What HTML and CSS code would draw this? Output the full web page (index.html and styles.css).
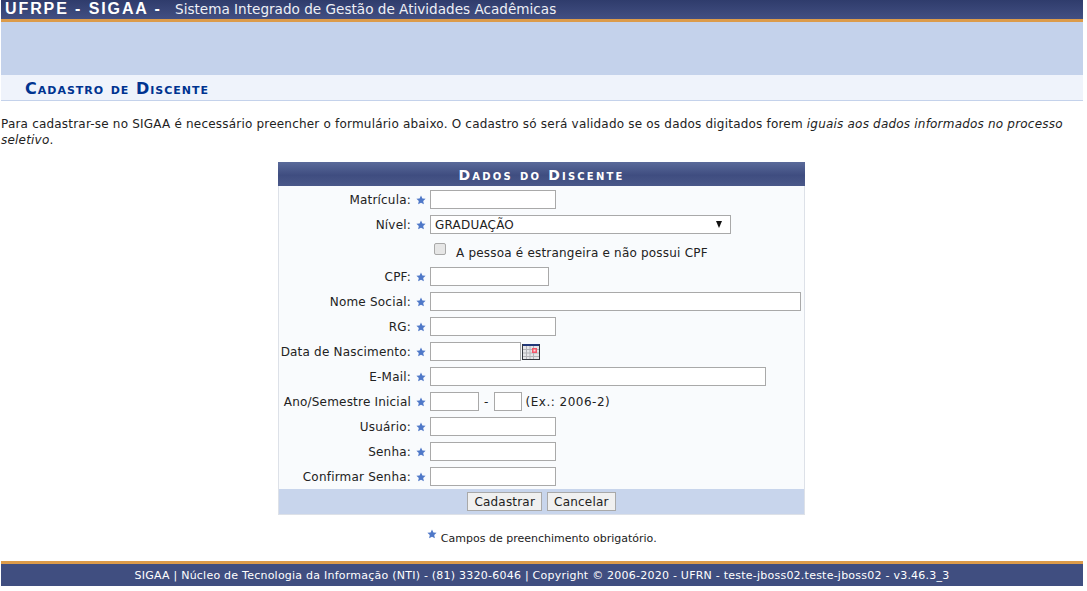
FILE: index.html
```html
<!DOCTYPE html>
<html lang="pt-BR">
<head>
    <meta charset="UTF-8">
    <title>SIGAA - Cadastro de Discente</title>
    <link rel="stylesheet" href="styles.css">
</head>
<body>
    <header class="topbar">
        <span class="topbar-brand">UFRPE - SIGAA -</span>
        <span class="topbar-name">Sistema Integrado de Gestão de Atividades Acadêmicas</span>
    </header>
    <div class="banner"></div>
    <h2 class="page-title">Cadastro de Discente</h2>
    <p class="intro">Para cadastrar-se no SIGAA é necessário preencher o formulário abaixo. O cadastro só será validado se os dados digitados forem <em>iguais aos dados informados no processo seletivo</em>.</p>

    <svg class="sprites" width="0" height="0">
        <symbol id="star" viewBox="0 0 10 10">
            <path d="M5 .4l1.400 3 3.200.4-2.400 2.200.7 3.300L5 7.700 2.100 9.300l.7-3.300L.4 3.800l3.200-.4z"/>
        </symbol>
    </svg>

    <form class="form-box">
        <div class="form-caption">Dados do Discente</div>
        <div class="form-body">
            <label class="field-label">Matrícula:</label>
            <svg class="star"><use href="#star"/></svg>
            <div class="field"><input class="input w-126" type="text"></div>

            <label class="field-label">Nível:</label>
            <svg class="star"><use href="#star"/></svg>
            <div class="field">
                <div class="select">GRADUAÇÃO<span class="select-arrow"></span></div>
            </div>

            <div class="foreign">
                <span class="checkbox"></span>
                <span class="foreign-text">A pessoa é estrangeira e não possui CPF</span>
            </div>

            <label class="field-label">CPF:</label>
            <svg class="star"><use href="#star"/></svg>
            <div class="field"><input class="input w-119" type="text"></div>

            <label class="field-label">Nome Social:</label>
            <svg class="star"><use href="#star"/></svg>
            <div class="field"><input class="input w-371" type="text"></div>

            <label class="field-label">RG:</label>
            <svg class="star"><use href="#star"/></svg>
            <div class="field"><input class="input w-126" type="text"></div>

            <label class="field-label">Data de Nascimento:</label>
            <svg class="star"><use href="#star"/></svg>
            <div class="field">
                <input class="input w-91" type="text">
                <svg class="calendar" viewBox="0 0 18 16">
                    <rect width="18" height="16" fill="#33363d"/>
                    <rect x="1" y="0" width="16" height="2" fill="#23397a"/>
                    <rect x="1" y="2" width="16" height="13" fill="#e6e6e8"/>
                    <path d="M4.500 2v13M8 2v13M11.500 2v13M1 5.500h16M1 9h16M1 12.500h16" stroke="#b4b4b8" fill="none"/>
                    <rect x="10" y="4" width="5" height="5" fill="#f4566a"/>
                    <rect x="11.500" y="5.500" width="2" height="2" fill="#fbd5da"/>
                </svg>
            </div>

            <label class="field-label">E-Mail:</label>
            <svg class="star"><use href="#star"/></svg>
            <div class="field"><input class="input w-336" type="text"></div>

            <label class="field-label">Ano/Semestre Inicial</label>
            <svg class="star"><use href="#star"/></svg>
            <div class="field semester">
                <input class="input w-49" type="text">
                <span class="dash">-</span>
                <input class="input w-28" type="text">
                <span class="hint">(Ex.: 2006-2)</span>
            </div>

            <label class="field-label">Usuário:</label>
            <svg class="star"><use href="#star"/></svg>
            <div class="field"><input class="input w-126" type="text"></div>

            <label class="field-label">Senha:</label>
            <svg class="star"><use href="#star"/></svg>
            <div class="field"><input class="input w-126" type="password"></div>

            <label class="field-label">Confirmar Senha:</label>
            <svg class="star"><use href="#star"/></svg>
            <div class="field"><input class="input w-126" type="password"></div>
        </div>
        <div class="form-actions">
            <button type="button">Cadastrar</button>
            <button type="button">Cancelar</button>
        </div>
    </form>

    <p class="required-note">
        <svg class="star star-note"><use href="#star"/></svg>
        Campos de preenchimento obrigatório.
    </p>

    <footer class="footer">SIGAA | Núcleo de Tecnologia da Informação (NTI) - (81) 3320-6046 | Copyright © 2006-2020 - UFRN - teste-jboss02.teste-jboss02 - v3.46.3_3</footer>
</body>
</html>
```

FILE: styles.css
```css
* {
    margin: 0;
    padding: 0;
    box-sizing: border-box;
}
body {
    font-family: 'DejaVu Sans', Verdana, sans-serif;
    font-size: 12px;
    letter-spacing: .2px;
    color: #222;
    background: white;
    padding: 0 4px 0 1px;
}
.topbar {
    height: 22px;
    background: linear-gradient(#2f3c6c, #424f82);
    border-bottom: 3px solid #dc9b4a;
    color: white;
    display: flex;
    align-items: center;
    padding: 0 0 2px 4px;
    white-space: nowrap;
    letter-spacing: 0;
}
.topbar-brand {
    font-family: 'Liberation Sans', Arial, sans-serif;
    font-size: 16px;
    font-weight: bold;
    letter-spacing: 1.900px;
    width: 170px;
}
.topbar-name {
    font-size: 13.600px;
    color: #eef0f6;
}
.banner {
    height: 53px;
    background: #c4d2eb;
}
.page-title {
    height: 26px;
    background: #eff3fb;
    border-bottom: 1px solid #c4d2eb;
    color: #003390;
    font-size: 16px;
    line-height: 19px;
    font-weight: bold;
    font-variant: small-caps;
    letter-spacing: 1px;
    padding: 4px 0 0 24px;
}
.intro {
    margin-top: 15px;
    line-height: 16px;
    height: 30px;
}
.sprites {
    position: absolute;
}
.form-box {
    width: 527px;
    margin: 16px 0 0 277px;
    border: 1px solid #dde1e8;
    border-top: 0;
}
.form-caption {
    height: 24px;
    background: linear-gradient(#5a6a9a, #3f4d80 55%, #4a5889);
    color: white;
    font-size: 14px;
    font-weight: bold;
    font-variant: small-caps;
    letter-spacing: 2.200px;
    text-align: center;
    line-height: 26px;
    margin: 0 -1px;
}
.form-body {
    display: grid;
    grid-template-columns: 132px 19px 1fr;
    grid-template-rows: 25px 25px 27px;
    grid-auto-rows: 25px;
    align-items: center;
    background: #f9fbfd;
    padding-top: 1px;
}
.field-label {
    text-align: right;
    white-space: nowrap;
}
.star {
    width: 10px;
    height: 10px;
    fill: #4f78c8;
    justify-self: center;
}
.field {
    display: flex;
    align-items: center;
}
.input {
    height: 19px;
    border: 1px solid #a9a9a9;
    background: white;
}
.w-126 { width: 126px; }
.w-119 { width: 119px; }
.w-371 { width: 371px; }
.w-91 { width: 91px; }
.w-336 { width: 336px; }
.w-49 { width: 49px; }
.w-28 { width: 28px; }
.select {
    width: 301px;
    height: 19px;
    border: 1px solid #a9a9a9;
    background: white;
    padding-left: 4px;
    line-height: 18px;
    position: relative;
}
.select-arrow {
    position: absolute;
    right: 8px;
    top: 5px;
    border-left: 3.500px solid transparent;
    border-right: 3.500px solid transparent;
    border-top: 7px solid #111;
}
.foreign {
    grid-column: 3;
    display: flex;
    align-items: center;
    gap: 10px;
    padding-left: 4px;
}
.checkbox {
    width: 12px;
    height: 12px;
    border: 1px solid #a9a9a9;
    border-radius: 2px;
    background: #e6e6e6;
    margin-top: -3px;
}
.foreign-text {
    margin-top: 5px;
}
.calendar {
    width: 18px;
    height: 16px;
    margin-left: 1px;
}
.dash {
    margin: 0 5px;
}
.hint {
    margin-left: 4px;
    letter-spacing: .5px;
}
.form-actions {
    height: 25px;
    background: #c8d5ec;
    display: flex;
    justify-content: center;
    align-items: center;
    gap: 5px;
}
button {
    height: 19px;
    padding: 0 6px;
    border: 1px solid #a9a9a9;
    background: #f0f0f0;
    font: inherit;
    letter-spacing: inherit;
    color: #222;
}
.required-note {
    margin-top: 17px;
    text-align: center;
    font-size: 11px;
    letter-spacing: 0;
}
.star-note {
    position: relative;
    top: -3px;
}
.footer {
    margin-top: 16px;
    height: 25px;
    background: #404e80;
    border-top: 3px solid #dc9b4a;
    color: white;
    font-size: 11px;
    letter-spacing: .235px;
    text-align: center;
    line-height: 24px;
    white-space: nowrap;
}
```
